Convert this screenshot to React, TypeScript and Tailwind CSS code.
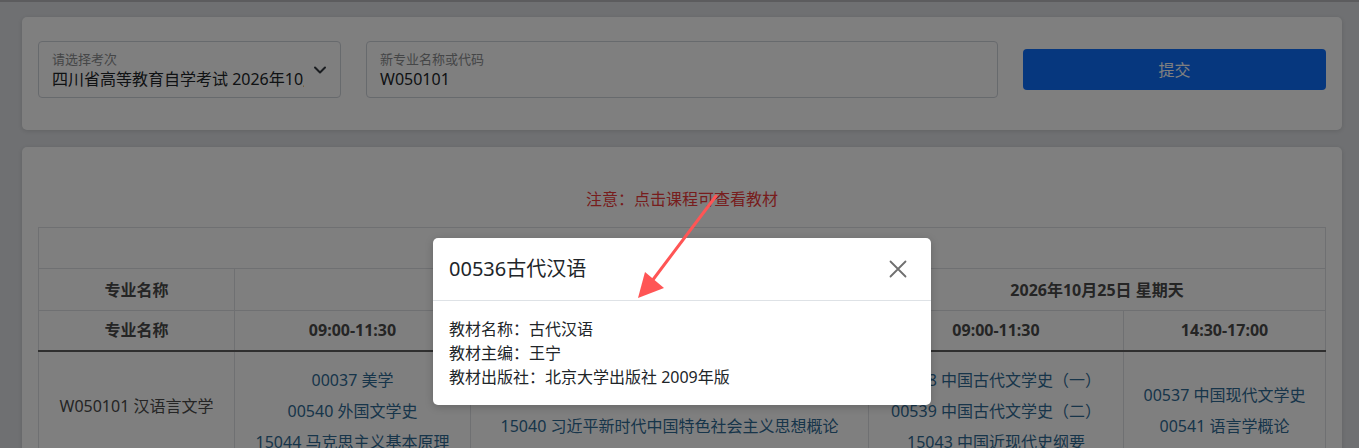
import React from "react";

const col2 = ["00037 美学", "00540 外国文学史", "15044 马克思主义基本原理"];
const col3 = ["00536 古代汉语", "15040 习近平新时代中国特色社会主义思想概论"];
const col4 = ["00538 中国古代文学史（一）", "00539 中国古代文学史（二）", "15043 中国近现代史纲要"];
const col5 = ["00537 中国现代文学史", "00541 语言学概论"];

function Items({ items }: { items: string[] }) {
  return (
    <div>
      {items.map((t) => (
        <div key={t} className="mt-[9px] leading-[22px] text-[#2e6a94] cursor-pointer">
          {t}
        </div>
      ))}
    </div>
  );
}

export default function App() {
  return (
    <div className="relative h-[448px] w-[1359px] overflow-hidden bg-[#dee0e4] font-['Noto_Sans','Noto_Sans_CJK_SC',sans-serif] text-[#212529]">
      <div className="h-[2px] bg-[#b8b9bc]" />
      <div className="pl-[22px] pr-[17px] pt-[15px]">
        {/* search card */}
        <div className="rounded-[5px] bg-white px-4 pt-6 pb-8 shadow-[0_1px_4px_rgba(0,0,0,0.12)]">
          <div className="flex items-start gap-[25px]">
            <div className="relative h-[57px] w-[303px] rounded-[4px] border border-[#ced4da] bg-white pl-[13px] pr-9">
              <div className="pt-[8px] text-[13px] leading-[18px] text-[#8a8c8e]">请选择考次</div>
              <div className="overflow-hidden whitespace-nowrap text-[16px] leading-[22px]">
                四川省高等教育自学考试 2026年10月
              </div>
              <svg
                className="absolute right-[12px] top-[20px]"
                width="16"
                height="16"
                viewBox="0 0 16 16"
                fill="none"
                stroke="#343a40"
                strokeWidth="2"
                strokeLinecap="round"
                strokeLinejoin="round"
              >
                <path d="m3 5.5 5 5 5-5" />
              </svg>
            </div>
            <div className="h-[57px] flex-1 rounded-[4px] border border-[#ced4da] bg-white pl-[13px]">
              <div className="pt-[8px] text-[13px] leading-[18px] text-[#8a8c8e]">新专业名称或代码</div>
              <div className="text-[16px] leading-[22px]">W050101</div>
            </div>
            <button className="mt-2 h-[41px] w-[303px] rounded-[4px] bg-[#0d6efd] text-[16px] text-white">
              提交
            </button>
          </div>
        </div>

        {/* result card */}
        <div className="mt-[17px] rounded-[5px] bg-white px-4 pt-[40px] pb-6 shadow-[0_1px_4px_rgba(0,0,0,0.12)]">
          <p className="text-center text-[16px] leading-[24px] text-[#ef3b3b]">注意：点击课程可查看教材</p>
          <table className="mt-4 w-full table-fixed border-collapse border border-[#dfe1e4] text-center text-[16px] text-[#4a4a4a]">
            <colgroup>
              <col className="w-[196px]" />
              <col className="w-[236px]" />
              <col className="w-[398px]" />
              <col className="w-[255px]" />
              <col className="w-[202px]" />
            </colgroup>
            <thead>
              <tr className="h-[41px]">
                <th colSpan={5} className="border border-[#dfe1e4] font-bold"></th>
              </tr>
              <tr className="h-[42px] font-bold">
                <th className="border border-[#dfe1e4]">专业名称</th>
                <th colSpan={2} className="border border-[#dfe1e4]">2026年10月24日 星期六</th>
                <th colSpan={2} className="border border-[#dfe1e4]">2026年10月25日 星期天</th>
              </tr>
              <tr className="h-[40px] border-b-2 border-b-[#5e5e5e] font-bold">
                <th className="border border-[#dfe1e4] border-b-2 border-b-[#5e5e5e]">专业名称</th>
                <th className="border border-[#dfe1e4] border-b-2 border-b-[#5e5e5e]">09:00-11:30</th>
                <th className="border border-[#dfe1e4] border-b-2 border-b-[#5e5e5e]">14:30-17:00</th>
                <th className="border border-[#dfe1e4] border-b-2 border-b-[#5e5e5e]">09:00-11:30</th>
                <th className="border border-[#dfe1e4] border-b-2 border-b-[#5e5e5e]">14:30-17:00</th>
              </tr>
            </thead>
            <tbody>
              <tr>
                <td className="border border-[#dfe1e4] pt-2 pb-[9px] align-middle">W050101 汉语言文学</td>
                <td className="border border-[#dfe1e4] pt-2 pb-[9px] align-middle">
                  <Items items={col2} />
                </td>
                <td className="border border-[#dfe1e4] pt-2 pb-[9px] align-middle">
                  <Items items={col3} />
                </td>
                <td className="border border-[#dfe1e4] pt-2 pb-[9px] align-middle">
                  <Items items={col4} />
                </td>
                <td className="border border-[#dfe1e4] pt-2 pb-[9px] align-middle">
                  <Items items={col5} />
                </td>
              </tr>
            </tbody>
          </table>
        </div>
      </div>

      {/* backdrop */}
      <div className="absolute inset-0 bg-black/50" />

      {/* modal */}
      <div className="absolute left-[433px] top-[238px] w-[498px] rounded-[5px] bg-white shadow-[0_2px_8px_rgba(0,0,0,0.2)]">
        <div className="flex items-center justify-between border-b border-[#dee2e6] p-4">
          <h5 className="text-[20px] leading-[30px] text-[#212529]">00536古代汉语</h5>
          <button className="mr-[7px] flex h-[20px] w-[20px] items-center justify-center">
            <svg width="18" height="18" viewBox="0 0 18 18" fill="none" stroke="#6f6f6f" strokeWidth="1.8" strokeLinecap="round">
              <path d="M1.5 1.5 16.5 16.5M16.5 1.5 1.5 16.5" />
            </svg>
          </button>
        </div>
        <div className="p-4 text-[16px] leading-[24px] text-[#212529]">
          <div>教材名称：古代汉语</div>
          <div>教材主编：王宁</div>
          <div>教材出版社：北京大学出版社 2009年版</div>
        </div>
      </div>

      {/* annotation arrow */}
      <svg className="pointer-events-none absolute left-0 top-0" width="1359" height="448">
        <line x1="716" y1="196" x2="652" y2="281" stroke="#ff5555" strokeWidth="3" strokeLinecap="round" />
        <polygon points="638,298 645,272 664,288" fill="#ff5555" />
      </svg>
    </div>
  );
}
